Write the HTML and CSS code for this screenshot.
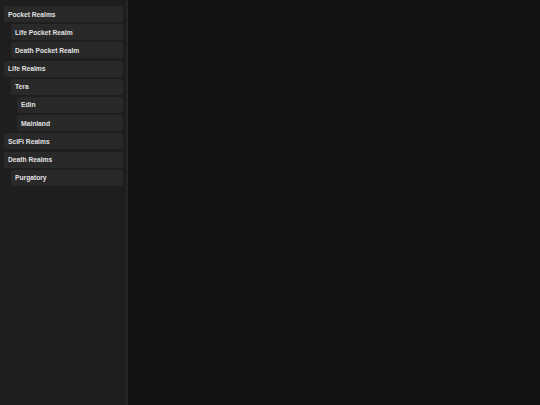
FILE: index.html
```html
<!DOCTYPE html>
<html>
<head>
<meta charset="utf-8">
<link rel="stylesheet" href="styles.css">
</head>
<body>
<div class="app">
  <nav class="sidebar">
    <div class="item l0">Pocket Realms</div>
    <div class="item l1">Life Pocket Realm</div>
    <div class="item l1">Death Pocket Realm</div>
    <div class="item l0">Life Realms</div>
    <div class="item l1">Tera</div>
    <div class="item l2">Edin</div>
    <div class="item l2">Mainland</div>
    <div class="item l0">SciFi Realms</div>
    <div class="item l0">Death Realms</div>
    <div class="item l1">Purgatory</div>
  </nav>
  <main class="main"></main>
</div>
</body>
</html>
```

FILE: styles.css
```css
html, body {
  margin: 0;
  padding: 0;
  height: 100%;
  background: #121212;
}
.app {
  display: flex;
  height: 100%;
}
.sidebar {
  width: 128px;
  box-sizing: border-box;
  background: #1e1e1e;
  border-right: 2px solid #262626;
  padding: 6px 3px 0 4px;
  display: flex;
  flex-direction: column;
  gap: 2.2px;
  flex: none;
}
.item {
  height: 16px;
  display: flex;
  align-items: center;
  background: #292929;
  border-radius: 2px;
  color: #e2e2e2;
  font-family: "Liberation Sans", Arial, sans-serif;
  font-weight: bold;
  font-size: 6.7px;
  padding-left: 4px;
  box-sizing: border-box;
}
.l1 { margin-left: 7px; }
.l2 { margin-left: 13px; }
.main {
  flex: 1;
  background: #121212;
}
```
